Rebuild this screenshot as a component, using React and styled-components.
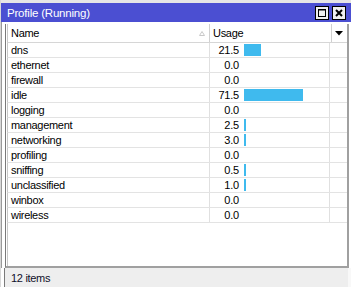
import React from "react";
import styled, { createGlobalStyle } from "styled-components";

const GlobalStyle = createGlobalStyle`
  html, body {
    margin: 0;
    padding: 0;
    background: #ffffff;
  }
  body {
    font-family: "Liberation Sans", Arial, sans-serif;
    font-size: 11px;
    color: #000;
  }
`;

const profiles = [
  { name: "dns", usage: 21.5 },
  { name: "ethernet", usage: 0 },
  { name: "firewall", usage: 0 },
  { name: "idle", usage: 71.5 },
  { name: "logging", usage: 0 },
  { name: "management", usage: 2.5 },
  { name: "networking", usage: 3.0 },
  { name: "profiling", usage: 0 },
  { name: "sniffing", usage: 0.5 },
  { name: "unclassified", usage: 1.0 },
  { name: "winbox", usage: 0 },
  { name: "wireless", usage: 0 },
];

const Window = styled.div`
  width: 351px;
  height: 287px;
  display: flex;
  flex-direction: column;
  background: #ffffff;
  border-left: 1px solid #d8d8d8;
  box-sizing: border-box;
  overflow: hidden;
`;

const TopStrip = styled.div`
  height: 3px;
  background: #e6e6e6;
`;

const TitleBar = styled.div`
  height: 19px;
  background: #4b4fd2;
  color: #ffffff;
  display: flex;
  align-items: center;
  justify-content: space-between;
  padding: 0 5px 0 6px;
  font-size: 11.5px;
  letter-spacing: -0.2px;
`;

const TitleButtons = styled.div`
  display: flex;
  gap: 3px;
  padding-top: 1px;
`;

const WinButton = styled.div`
  width: 12px;
  height: 12px;
  background: #f0f0f0;
  border: 1px solid #000;
  display: flex;
  align-items: center;
  justify-content: center;
`;

const Body = styled.div`
  flex: 1;
  display: flex;
  padding: 2px 2px 0 3px;
  border-left: 1px solid #9a9a9a;
  min-height: 0;
`;

const ListFrame = styled.div`
  flex: 1;
  display: flex;
  flex-direction: column;
  background: #ffffff;
  border-left: 1px solid #7a7a7a;
  border-right: 2px solid #a0a0a0;
  border-bottom: 2px solid #a0a0a0;
`;

const HeaderRow = styled.div`
  display: grid;
  grid-template-columns: 202px 122px 1fr;
  height: 18px;
  border-bottom: 1px solid #d6d6d6;
  margin-left: 1px;
  border-left: 1px solid #c8c8c8;
`;

const HeaderCell = styled.div`
  display: flex;
  align-items: center;
  justify-content: ${(p) => (p.center ? "center" : "space-between")};
  padding: 0 ${(p) => (p.center ? 0 : 4)}px 0 ${(p) => (p.center ? 0 : 3)}px;
  border-right: 1px solid ${(p) => (p.last ? "transparent" : "#d0d0d0")};
  letter-spacing: -0.3px;
`;

const Row = styled.div`
  display: grid;
  grid-template-columns: 202px 120px 1fr;
  height: 14px;
  border-bottom: 1px solid #e3e3e3;
  margin-left: 1px;
  border-left: 1px solid #c8c8c8;
`;

const NameCell = styled.div`
  display: flex;
  align-items: center;
  padding-left: 3px;
  border-right: 1px solid #e0e0e0;
  letter-spacing: -0.3px;
  line-height: 14px;
`;

const UsageCell = styled.div`
  display: flex;
  align-items: center;
  border-right: 1px solid #e0e0e0;
`;

const Value = styled.span`
  width: 29px;
  text-align: right;
  letter-spacing: -0.2px;
`;

const Bar = styled.div`
  height: 12px;
  margin-left: 5px;
  background: #3fbaee;
`;

const Filler = styled.div`
  flex: 1;
  margin-left: 1px;
  border-left: 1px solid #c8c8c8;
`;

const StatusBar = styled.div`
  height: 18px;
  background: #eeeeee;
  display: flex;
  align-items: center;
  padding-left: 6px;
  padding-top: 1px;
  color: #10102a;
  letter-spacing: -0.3px;
  border-left: 1px solid #7a7a7a;
  margin-left: 3px;
  border-right: 3px solid #f8f8f8;
`;

const MaxIcon = () => (
  <svg width="10" height="10" viewBox="0 0 10 10">
    <rect x="1.5" y="1.5" width="7" height="7" fill="none" stroke="#000" strokeWidth="1" />
    <line x1="1" y1="2" x2="9" y2="2" stroke="#000" strokeWidth="1" />
  </svg>
);

const CloseIcon = () => (
  <svg width="10" height="10" viewBox="0 0 10 10">
    <path d="M2 2 L8 8 M8 2 L2 8" stroke="#000" strokeWidth="2" />
  </svg>
);

const SortIcon = () => (
  <svg width="6" height="5" viewBox="0 0 6 5">
    <path d="M3 0.5 L5.5 4.5 L0.5 4.5 Z" fill="none" stroke="#c8c8c8" strokeWidth="1" />
  </svg>
);

const DropIcon = () => (
  <svg width="8" height="5" viewBox="0 0 8 5">
    <path d="M0 0 L8 0 L4 4.5 Z" fill="#000" />
  </svg>
);

const barWidth = (v) => (v > 0 ? Math.max(2, Math.round(v * 0.84 - 1)) : 0);

export default function App() {
  return (
    <>
      <GlobalStyle />
      <Window>
        <TopStrip />
        <TitleBar>
          <span>Profile (Running)</span>
          <TitleButtons>
            <WinButton>
              <MaxIcon />
            </WinButton>
            <WinButton>
              <CloseIcon />
            </WinButton>
          </TitleButtons>
        </TitleBar>
        <Body>
          <ListFrame>
            <HeaderRow>
              <HeaderCell>
                <span>Name</span>
                <SortIcon />
              </HeaderCell>
              <HeaderCell>
                <span>Usage</span>
              </HeaderCell>
              <HeaderCell center last>
                <DropIcon />
              </HeaderCell>
            </HeaderRow>
            {profiles.map((p) => (
              <Row key={p.name}>
                <NameCell>{p.name}</NameCell>
                <UsageCell>
                  <Value>{p.usage.toFixed(1)}</Value>
                  {p.usage > 0 && <Bar style={{ width: barWidth(p.usage) }} />}
                </UsageCell>
                <div />
              </Row>
            ))}
            <Filler />
          </ListFrame>
        </Body>
        <StatusBar>12 items</StatusBar>
      </Window>
    </>
  );
}
